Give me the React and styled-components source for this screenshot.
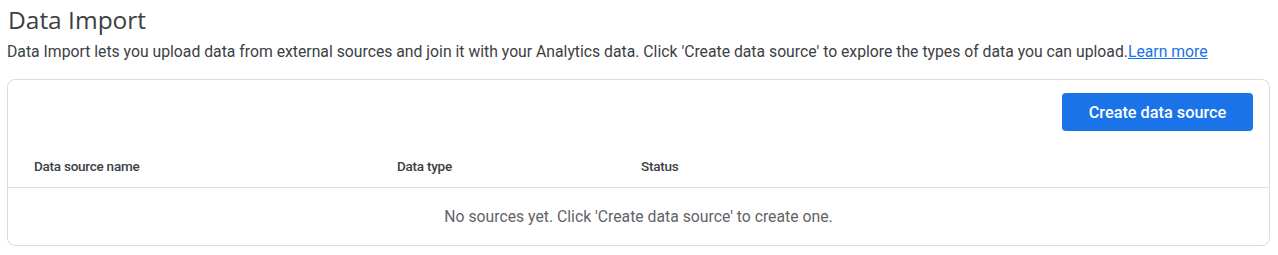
import React from "react";
import styled, { createGlobalStyle } from "styled-components";

const GlobalStyle = createGlobalStyle`
  body {
    margin: 0;
    background: #ffffff;
    font-family: Roboto, "Liberation Sans", Arial, sans-serif;
  }
`;

const Page = styled.div`
  padding: 4px 7px 0 7px;
  width: 1278px;
  box-sizing: border-box;
`;

const Title = styled.h1`
  margin: 0 0 0 1px;
  font-family: "Open Sans", Roboto, sans-serif;
  font-weight: 400;
  font-size: 24.5px;
  line-height: 32px;
  color: #3c4043;
`;

const Description = styled.p`
  margin: 6px 0 0 0;
  font-size: 15.75px;
  line-height: 20px;
  color: #3c4043;
`;

const Link = styled.a`
  color: #1a73e8;
  text-decoration: underline;
`;

const Card = styled.div`
  margin-top: 17px;
  width: 1263px;
  box-sizing: border-box;
  border: 1px solid #dadce0;
  border-radius: 8px;
  background: #fff;
`;

const Toolbar = styled.div`
  display: flex;
  justify-content: flex-end;
  padding: 13px 16px 0 0;
`;

const PrimaryButton = styled.button`
  width: 191px;
  height: 38px;
  border: none;
  border-radius: 4px;
  background: #1a73e8;
  color: #fff;
  font-family: Roboto, sans-serif;
  font-weight: 500;
  font-size: 16.3px;
  cursor: pointer;
`;

const HeaderRow = styled.div`
  display: grid;
  grid-template-columns: 363px 244px 1fr;
  padding: 0 26px;
  height: 57px;
  align-items: end;
  padding-bottom: 13px;
  box-sizing: border-box;
  border-bottom: 1px solid #e0e0e0;
`;

const HeaderCell = styled.div`
  font-size: 13.5px;
  font-weight: 500;
  letter-spacing: -0.25px;
  color: #3c4043;
  line-height: 16px;
`;

const Empty = styled.div`
  height: 57px;
  display: flex;
  align-items: center;
  justify-content: center;
  font-size: 15.75px;
  color: #5f6368;
`;

export default function App() {
  const columns = ["Data source name", "Data type", "Status"];
  return (
    <>
      <GlobalStyle />
      <Page>
        <Title>Data Import</Title>
        <Description>
          Data Import lets you upload data from external sources and join it
          with your Analytics data. Click 'Create data source' to explore the
          types of data you can upload.<Link href="#">Learn more</Link>
        </Description>
        <Card>
          <Toolbar>
            <PrimaryButton>Create data source</PrimaryButton>
          </Toolbar>
          <HeaderRow>
            {columns.map((c) => (
              <HeaderCell key={c}>{c}</HeaderCell>
            ))}
          </HeaderRow>
          <Empty>No sources yet. Click 'Create data source' to create one.</Empty>
        </Card>
      </Page>
    </>
  );
}
